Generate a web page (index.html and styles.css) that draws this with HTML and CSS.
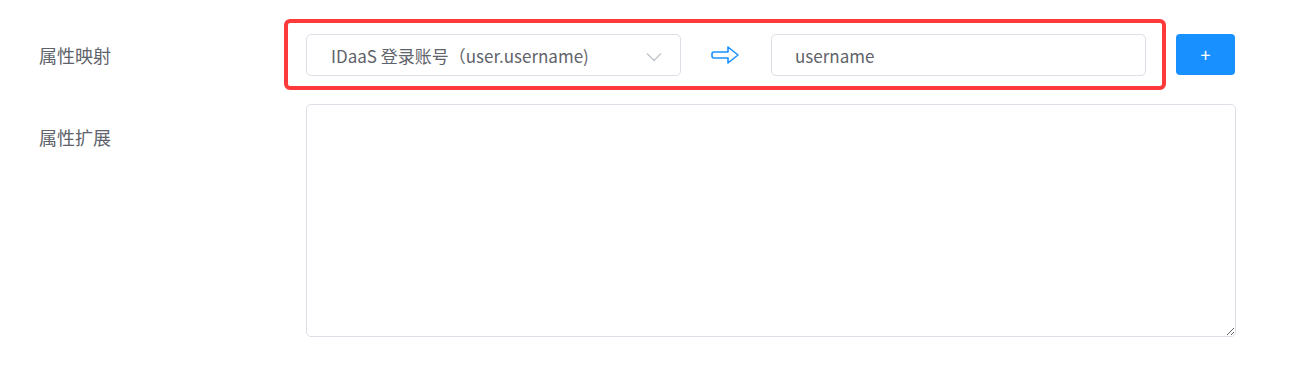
FILE: index.html
```html
<!DOCTYPE HTML>
<html lang="zh-CN">
<head>
    <meta charset="UTF-8">
    <meta name="viewport" content="width=device-width, initial-scale=1">
    <title>属性映射</title>
    <link rel="stylesheet" href="styles.css">
</head>
<body>

    <div class="form">
        <!-- 属性映射 -->
        <div class="form-item">
            <label class="form-label">属性映射</label>
            <div class="form-content">
                <div class="mapping-box">
                    <div class="select">
                        <span class="select-text">IDaaS 登录账号（user.username)</span>
                        <svg class="select-arrow" width="16" height="10" viewBox="0 0 16 10">
                            <path d="M1 1.5 L8 8.5 L15 1.5" fill="none" stroke="#c0c4cc" stroke-width="1.3"/>
                        </svg>
                    </div>
                    <svg class="map-arrow" width="30" height="20" viewBox="0 0 30 20">
                        <path d="M3 7 H17 V2 L27 10 L17 18 V13 H3 Q1 13 1 11 V9 Q1 7 3 7 Z" fill="none" stroke="#1890ff" stroke-width="1.6" stroke-linejoin="round"/>
                    </svg>
                    <input class="input" type="text" value="username">
                </div>
                <div class="button">+</div>
            </div>
        </div>

        <!-- 属性扩展 -->
        <div class="form-item">
            <label class="form-label label-top">属性扩展</label>
            <div class="form-content">
                <textarea class="textarea"></textarea>
            </div>
        </div>
    </div>

</body>
</html>
```

FILE: styles.css
```css
body {
    margin: 0;
    background-color: #fff;
    font-family: "Noto Sans CJK SC", "Noto Sans", sans-serif;
    color: #5f636b;
}
.form {
    padding-top: 19px;
}
.form-item {
    display: flex;
    align-items: flex-start;
    margin-bottom: 14px;
}
.form-label {
    width: 267px;
    padding-left: 39px;
    font-size: 18px;
    line-height: 42px;
    margin-top: 15px;
}
.label-top {
    margin-top: 12px;
}
.form-content {
    display: flex;
    align-items: center;
}
.mapping-box {
    display: flex;
    align-items: center;
    margin-left: -22px;
    padding: 11px 16px 10px 18px;
    border: 4px solid #fc3a3a;
    border-radius: 6px;
}
.select {
    width: 375px;
    height: 42px;
    box-sizing: border-box;
    border: 1px solid #dcdfe6;
    border-radius: 5px;
    display: flex;
    align-items: center;
    justify-content: space-between;
    padding: 0 18px 0 24px;
    font-size: 17px;
}
.select-arrow {
    margin-top: 4px;
}
.map-arrow {
    margin: 0 30px 0 30px;
}
.input {
    width: 375px;
    height: 42px;
    box-sizing: border-box;
    border: 1px solid #dcdfe6;
    border-radius: 5px;
    padding: 0 23px;
    font-family: "Noto Sans CJK SC", "Noto Sans", sans-serif;
    font-size: 17px;
    color: #5f636b;
    outline: none;
}
.button {
    margin-left: 10px;
    width: 59px;
    height: 41px;
    line-height: 40px;
    background-color: #1890ff;
    color: white;
    border-radius: 4px;
    text-align: center;
    font-size: 18px;
    cursor: pointer;
}
.textarea {
    display: block;
    width: 930px;
    height: 233px;
    box-sizing: border-box;
    border: 1px solid #dcdfe6;
    border-radius: 5px;
    outline: none;
}
```
